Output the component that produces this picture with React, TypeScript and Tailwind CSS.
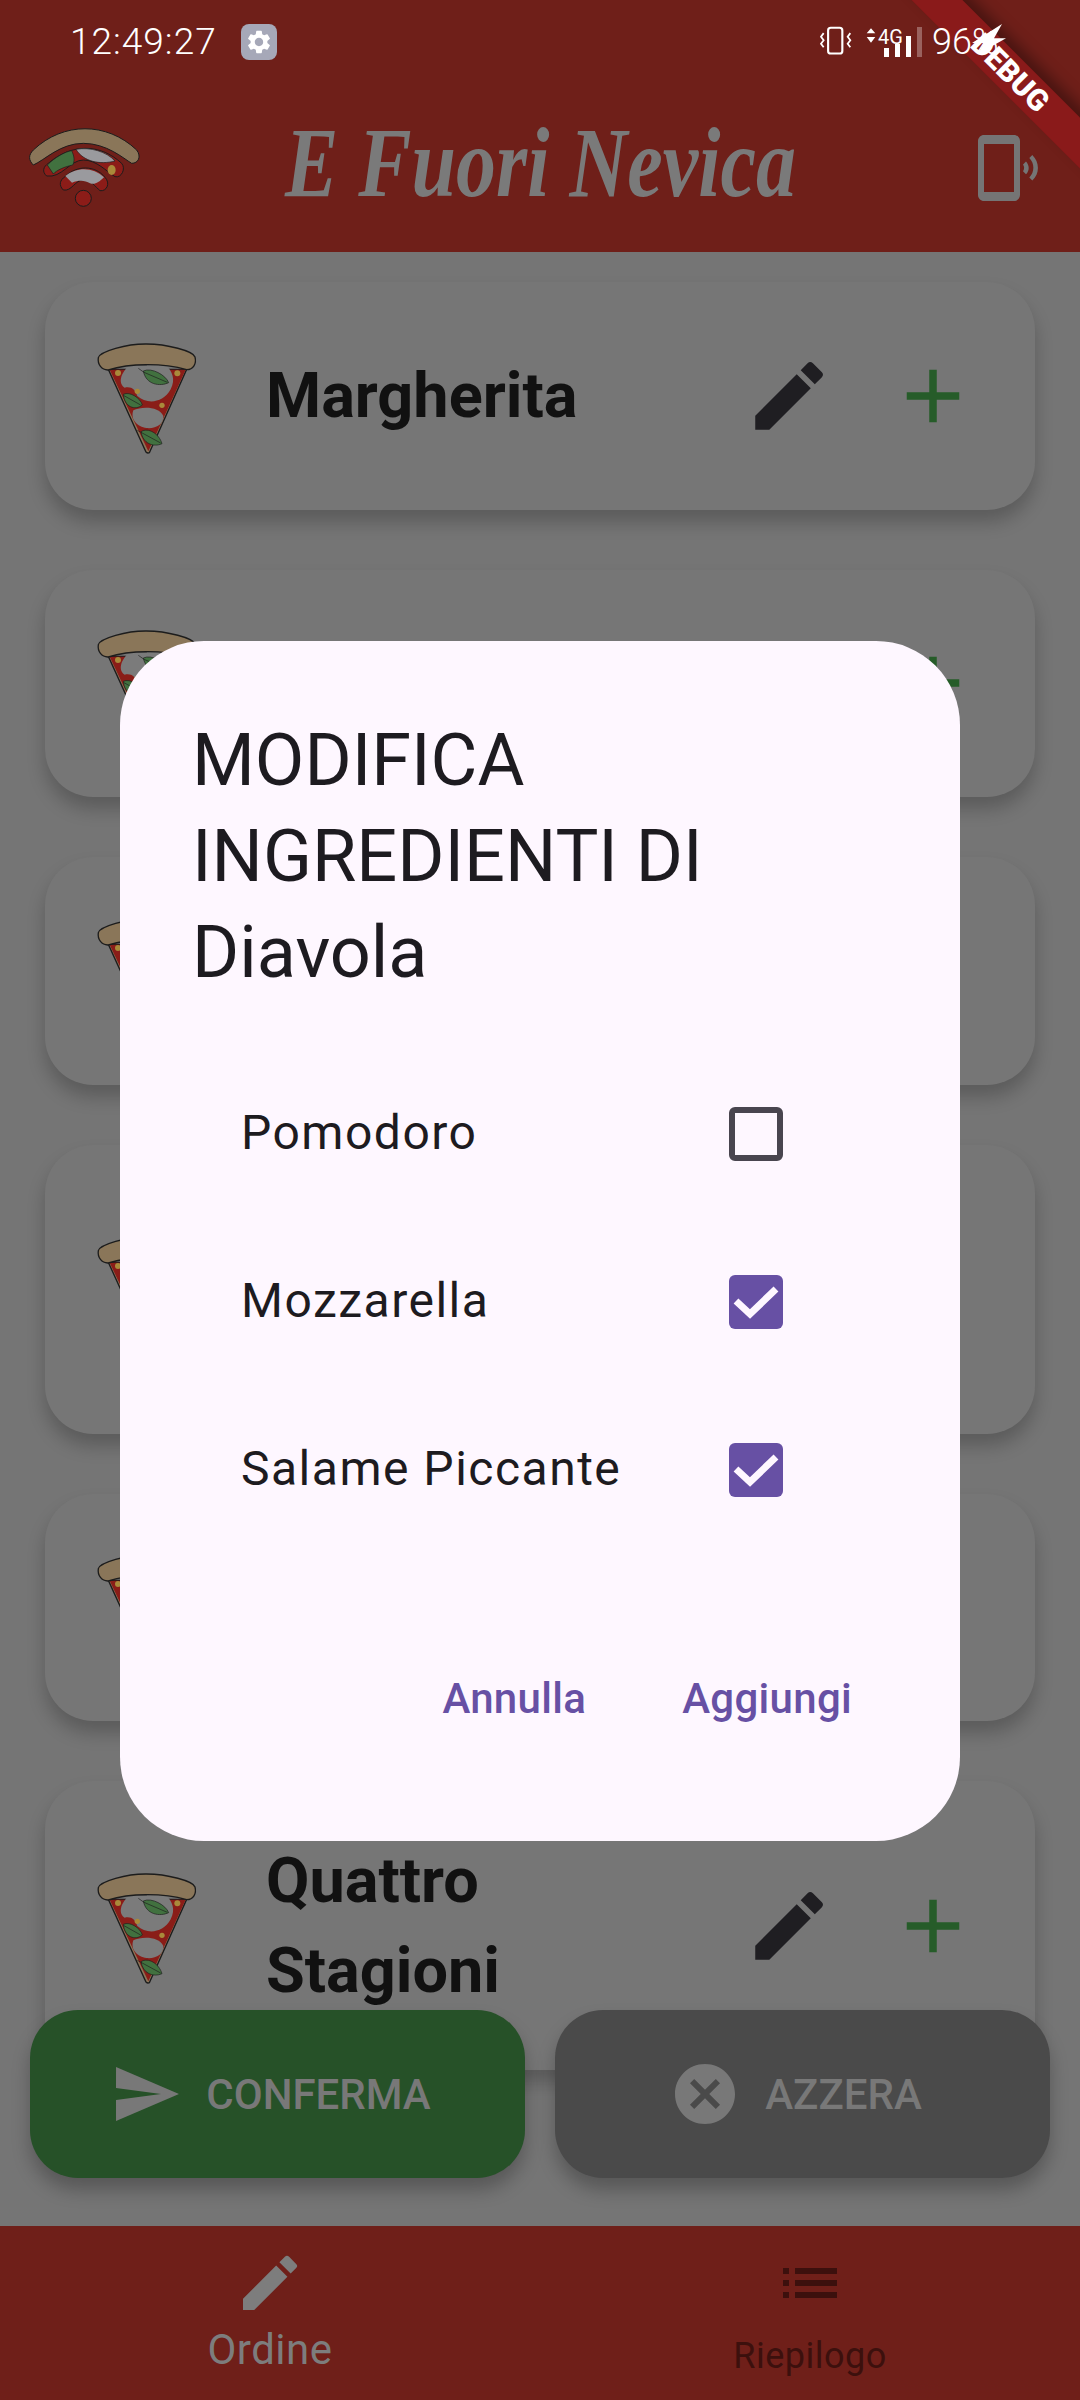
import React from "react";
import { MdAdd, MdCancel, MdEdit, MdList, MdPhonelinkRing, MdSend, MdSettings } from "react-icons/md";

const pizzas = [
  { name: ["Margherita"], tall: false },
  { name: ["Marinara"], tall: false },
  { name: ["Diavola"], tall: false },
  { name: ["Prosciutto", "e Funghi"], tall: true },
  { name: ["Capricciosa"], tall: false },
  { name: ["Quattro", "Stagioni"], tall: true },
];

const ingredients = [
  { label: "Pomodoro", checked: false },
  { label: "Mozzarella", checked: true },
  { label: "Salame Piccante", checked: true },
];

const PizzaSlice = () => (
  <svg viewBox="0 0 390 450" className="w-[130px] h-[150px] shrink-0">
    <path d="M85 145 L320 145 L208 395 Q203 398 198 393 Z" fill="#8a7659" stroke="#1c1c1c" strokeWidth="4" />
    <path d="M89 146 L317 146 L205 391 Z" fill="#8a1d18" />
    <path d="M145 135 C116 165 118 190 134 200 C155 196 165 205 172 225 C200 250 248 248 272 205 C288 175 276 150 258 133 Z" fill="#7b7b7b" />
    <path d="M160 268 C185 256 238 256 250 285 C252 310 226 324 200 321 C172 318 150 295 160 268 Z" fill="#7b7b7b" />
    <circle cx="114" cy="156" r="9" fill="#a98a3a" />
    <circle cx="292" cy="157" r="9" fill="#a98a3a" />
    <circle cx="172" cy="211" r="8" fill="#a98a3a" />
    <circle cx="246" cy="253" r="8" fill="#a98a3a" />
    <path d="M190 150 C215 138 258 163 266 185 C240 197 198 192 190 150 Z" fill="#41713f" stroke="#1c1c1c" strokeWidth="2" />
    <path d="M175 142 L192 154 L262 184" fill="none" stroke="#1c1c1c" strokeWidth="2" />
    <path d="M130 220 C150 210 182 232 187 252 C165 270 133 258 130 220 Z" fill="#41713f" stroke="#1c1c1c" strokeWidth="2" />
    <path d="M132 224 L182 252" fill="none" stroke="#1c1c1c" strokeWidth="2" />
    <path d="M183 332 C205 318 237 338 246 368 C220 380 188 367 183 332 Z" fill="#41713f" stroke="#1c1c1c" strokeWidth="2" />
    <path d="M172 328 L242 366" fill="none" stroke="#1c1c1c" strokeWidth="2" />
    <path d="M55 110 C60 92 140 68 200 69 C260 69 340 90 345 108 C350 128 340 146 320 146 C250 126 150 126 85 147 C65 148 52 130 55 110 Z" fill="#8a7659" stroke="#1c1c1c" strokeWidth="4" />
  </svg>
);

// logo del wifi fatto a pizza
const WifiPizza = () => (
  <svg viewBox="0 0 510 390" className="w-[170px] h-[130px]">
    <path d="M140 228 C125 215 130 200 145 190 C215 130 300 130 365 190 C378 205 365 235 345 230 C320 215 290 180 250 180 C210 180 185 235 140 228 Z" fill="#8c1c18" stroke="#1c1c1c" strokeWidth="3" />
    <path d="M142 195 C165 172 195 155 215 152 C224 170 224 185 218 195 C195 200 170 210 160 222 Z" fill="#41713f" stroke="#1c1c1c" strokeWidth="2" />
    <path d="M228 148 C270 140 320 155 345 183 C300 195 250 185 228 148 Z" fill="#9a9a9e" stroke="#1c1c1c" strokeWidth="2" />
    <ellipse cx="335" cy="210" rx="12" ry="15" fill="#a98a3a" />
    <path d="M190 270 C175 255 180 240 195 230 C230 195 285 195 315 232 C332 250 320 275 300 272 C285 260 275 240 250 240 C225 240 215 275 190 270 Z" fill="#8c1c18" stroke="#1c1c1c" strokeWidth="3" />
    <path d="M196 228 C230 200 280 200 312 232 C295 248 285 255 270 250 C255 240 235 240 216 248 Z" fill="#9a9a9e" />
    <circle cx="250" cy="295" r="24" fill="#8c1c18" stroke="#1c1c1c" strokeWidth="3" />
    <path d="M100 195 C85 180 85 165 100 150 C190 65 320 65 410 150 C425 170 415 190 395 190 C370 175 320 130 250 130 C180 130 135 180 100 195 Z" fill="#8a7659" stroke="#1c1c1c" strokeWidth="3" />
  </svg>
);

const PizzaCard = ({ name, tall }: { name: string[]; tall: boolean }) => (
  <div
    className={`${tall ? "h-[289px]" : "h-[227.5px]"} shrink-0 flex items-center rounded-[48px] bg-[#767676] pl-[35px] pr-[57px] shadow-[0_12px_18px_rgba(0,0,0,0.22)]`}
  >
    <PizzaSlice />
    <div className="ml-[61px] -translate-x-[5px] flex-1 text-[63px] leading-[90px] font-bold text-[#111111]">
      {name.map((line) => (
        <div key={line}>{line}</div>
      ))}
    </div>
    <MdEdit size={90} className="text-[#1f1e22]" />
    <MdAdd size={90} className="ml-[54px] text-[#265c29]" />
  </div>
);

const StatusBar = () => (
  <div className="absolute left-0 top-0 w-[1080px] h-[84px] text-white">
    <div className="absolute left-[70px] top-[20px] text-[37px] leading-[44px] font-light tracking-[1px]">12:49:27</div>
    <div className="absolute left-[241px] top-[24px] w-[36px] h-[36px] rounded-[8px] bg-[#a6a8b8] flex items-center justify-center">
      <MdSettings size={28} />
    </div>
    <svg viewBox="0 0 40 36" className="absolute left-[819px] top-[26px] w-[36px] h-[32px]">
      <rect x="10" y="2" width="16" height="29" rx="3" fill="none" stroke="white" strokeWidth="2.4" />
      <path d="M5 8 L2 12 L5 16 L2 20 L5 24 M35 8 L32 12 L35 16 L32 20 L35 24" fill="none" stroke="white" strokeWidth="2" />
    </svg>
    <svg viewBox="0 0 14 20" className="absolute left-[866px] top-[28px] w-[10px] h-[15px]">
      <path d="M7 0 L13 7 H1 Z M7 20 L13 12 H1 Z" fill="white" />
    </svg>
    <div className="absolute left-[878px] top-[25px] text-[20px] leading-[24px]">4G</div>
    <div className="absolute left-[884px] top-[48px] w-[5px] h-[9px] bg-white" />
    <div className="absolute left-[895px] top-[44px] w-[5px] h-[13px] bg-white" />
    <div className="absolute left-[906px] top-[36px] w-[5px] h-[21px] bg-white" />
    <div className="absolute left-[917px] top-[27px] w-[5px] h-[30px] bg-white/30" />
    <div className="absolute left-[932px] top-[20px] text-[36px] leading-[44px] font-light">96%</div>
    <svg viewBox="0 0 40 38" className="absolute left-[970px] top-[24px] w-[40px] h-[30px]" preserveAspectRatio="none">
      <path d="M32 0 L24 18 L36 18 L8 38 L14 24 L2 24 Z" fill="white" />
    </svg>
  </div>
);

const App = () => {
  return (
    <div className="relative w-[1080px] h-[2400px] overflow-hidden bg-[#757575] font-['Roboto',sans-serif]">
      <div className="flex flex-col h-full">
        <header className="h-[252px] shrink-0 bg-[#6f1f19] flex items-start">
          <div className="mt-[100px]">
            <WifiPizza />
          </div>
          <div className="flex-1 mt-[108px] pr-[62px] text-center text-[100px] leading-[110px] italic font-bold text-[#7a7a7a] font-['Liberation_Serif',serif]">
            <span className="inline-block scale-x-[0.8] whitespace-nowrap">E Fuori Nevica</span>
          </div>
          <MdPhonelinkRing size={72} className="mt-[132px] mr-[36px] text-[#757575]" />
        </header>

        <main className="flex-1 min-h-0 overflow-hidden px-[45px] pt-[30px] flex flex-col gap-[60px]">
          {pizzas.map((p) => (
            <PizzaCard key={p.name.join(" ")} name={p.name} tall={p.tall} />
          ))}
        </main>

        <nav className="h-[174px] shrink-0 bg-[#6f1f19] grid grid-cols-2">
          <div className="flex flex-col items-center pt-[21px] text-[#7d7d7d]">
            <MdEdit size={72} />
            <span className="text-[42px] leading-[50px] mt-[6px] tracking-[0.5px]">Ordine</span>
          </div>
          <div className="flex flex-col items-center pt-[21px] text-[#3c100d]">
            <MdList size={72} />
            <span className="text-[36px] leading-[44px] mt-[15px] tracking-[0.5px]">Riepilogo</span>
          </div>
        </nav>
      </div>

      {/* Pulsanti flottanti */}
      <div className="absolute left-[30px] top-[2010px] flex gap-[30px]">
        <button className="w-[495px] h-[168px] pr-[14px] rounded-[48px] bg-[#265128] flex items-center justify-center gap-[24px] text-[42px] font-medium text-[#787878] shadow-[0_12px_18px_rgba(0,0,0,0.25)]">
          <MdSend size={72} />
          CONFERMA
        </button>
        <button className="w-[495px] h-[168px] pr-[14px] rounded-[48px] bg-[#4a4a4a] flex items-center justify-center gap-[24px] text-[42px] font-medium text-[#787878] shadow-[0_12px_18px_rgba(0,0,0,0.25)]">
          <MdCancel size={72} />
          AZZERA
        </button>
      </div>

      {/* Dialog */}
      <div className="absolute left-[120px] top-[641px] w-[840px] h-[1200px] rounded-[84px] bg-[#fef7ff] pt-[72px] px-[72px] text-[#1d1b20]">
        <h2 className="text-[72px] leading-[96px] font-normal">
          MODIFICA
          <br />
          INGREDIENTI DI
          <br />
          Diavola
        </h2>
        <div className="mt-[48px] flex flex-col">
          {ingredients.map((i) => (
            <div key={i.label} className="h-[168px] flex items-center justify-between pl-[49px] pr-[105px] text-[48px] tracking-[1.5px]">
              <span>{i.label}</span>
              {i.checked ? (
                <span className="mt-[2px] w-[54px] h-[54px] rounded-[6px] bg-[#6750a4] flex items-center justify-center">
                  <svg viewBox="0 0 54 54" className="w-[54px] h-[54px]">
                    <path d="M7 26 L21 39 L47 14" fill="none" stroke="#fef7ff" strokeWidth="7" />
                  </svg>
                </span>
              ) : (
                <span className="mt-[2px] w-[54px] h-[54px] rounded-[6px] border-[6px] border-[#49454f]" />
              )}
            </div>
          ))}
        </div>
        <div className="mt-[114px] flex justify-end gap-[96px] pr-[36px] text-[42px] font-medium tracking-[0.3px] text-[#6750a4]">
          <span>Annulla</span>
          <span>Aggiungi</span>
        </div>
      </div>

      {/* Banner debug di Flutter */}
      <div className="absolute left-[860px] top-[55px] w-[300px] h-[36px] rotate-45 bg-[#8a1a1a] shadow-[0_-8px_14px_rgba(0,0,0,0.35)] flex items-center justify-center text-[30px] leading-[36px] font-black text-white">
        DEBUG
      </div>

      <StatusBar />
    </div>
  );
};

export default App;
